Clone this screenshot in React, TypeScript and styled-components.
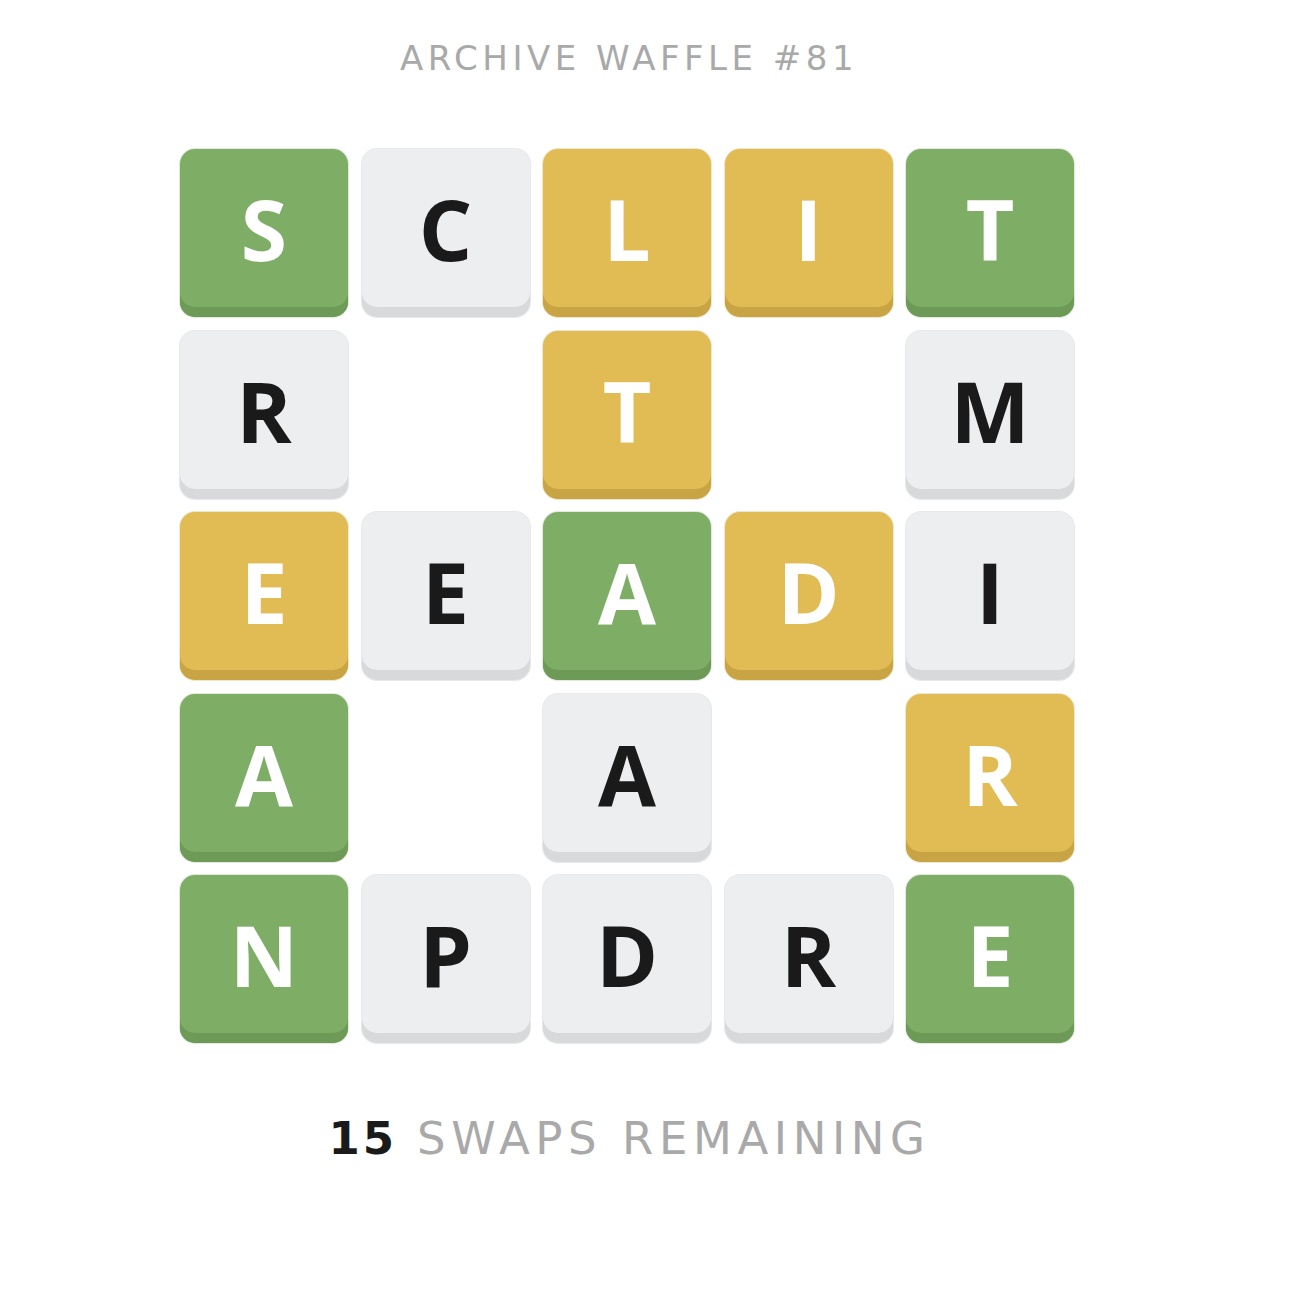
import React from "react";
import styled, { createGlobalStyle } from "styled-components";

const Global = createGlobalStyle`
  html, body { margin: 0; padding: 0; background: #ffffff; }
  body { font-family: "Open Sans", "Noto Sans", sans-serif; }
`;

const Page = styled.div`
  width: 1254px;
  display: flex;
  flex-direction: column;
  align-items: center;
  padding-top: 36px;
`;

const Title = styled.h1`
  margin: 0;
  font-family: "DejaVu Sans", sans-serif;
  font-weight: 400;
  font-size: 34px;
  line-height: 44px;
  letter-spacing: 4.5px;
  color: #a9a9a9;
  padding-left: 4px;
`;

const Board = styled.div`
  margin-top: 69px;
  display: grid;
  grid-template-columns: repeat(5, 168px);
  grid-auto-rows: 168px;
  column-gap: 13.5px;
  row-gap: 13.5px;
`;

type Kind = "green" | "yellow" | "grey" | "empty";

const palette: Record<Exclude<Kind, "empty">, { bg: string; edge: string; fg: string; border: string }> = {
  green: { bg: "#7ead66", edge: "#6d9b57", fg: "#ffffff", border: "#e3e9df" },
  yellow: { bg: "#e1bb53", edge: "#c9a444", fg: "#ffffff", border: "#efe6cf" },
  grey: { bg: "#edeef0", edge: "#d8d9db", fg: "#1a1a1a", border: "#e8e9eb" },
};

const Tile = styled.div<{ $kind: Kind }>`
  border-radius: 15px;
  display: flex;
  align-items: center;
  justify-content: center;
  padding-bottom: 8px;
  box-sizing: border-box;
  visibility: ${(p) => (p.$kind === "empty" ? "hidden" : "visible")};
  background: ${(p) => (p.$kind === "empty" ? "transparent" : palette[p.$kind].bg)};
  color: ${(p) => (p.$kind === "empty" ? "transparent" : palette[p.$kind].fg)};
  box-shadow: ${(p) =>
    p.$kind === "empty"
      ? "none"
      : `inset 0 -10px 0 ${palette[p.$kind].edge}, 0 0 0 1px ${palette[p.$kind].border}`};
  font-family: "Open Sans", sans-serif;
  font-weight: 700;
  font-size: 84px;
  line-height: 1;
`;

const Footer = styled.div`
  margin-top: 68px;
  font-family: "DejaVu Sans", sans-serif;
  font-size: 45px;
  line-height: 56px;
  letter-spacing: 5.6px;
  color: #a9a9a9;
  padding-left: 5px;
`;

const Count = styled.span`
  color: #1a1a1a;
  font-weight: 700;
  letter-spacing: 3px;
  margin-right: 20px;
`;

const rows: [string, Kind][][] = [
  [["S", "green"], ["C", "grey"], ["L", "yellow"], ["I", "yellow"], ["T", "green"]],
  [["R", "grey"], ["", "empty"], ["T", "yellow"], ["", "empty"], ["M", "grey"]],
  [["E", "yellow"], ["E", "grey"], ["A", "green"], ["D", "yellow"], ["I", "grey"]],
  [["A", "green"], ["", "empty"], ["A", "grey"], ["", "empty"], ["R", "yellow"]],
  [["N", "green"], ["P", "grey"], ["D", "grey"], ["R", "grey"], ["E", "green"]],
];

export default function App() {
  return (
    <>
      <Global />
      <Page>
        <Title>ARCHIVE WAFFLE #81</Title>
        <Board>
          {rows.flatMap((row, r) =>
            row.map(([ch, kind], c) => (
              <Tile key={`${r}-${c}`} $kind={kind}>
                {ch}
              </Tile>
            ))
          )}
        </Board>
        <Footer>
          <Count>15</Count>SWAPS REMAINING
        </Footer>
      </Page>
    </>
  );
}
